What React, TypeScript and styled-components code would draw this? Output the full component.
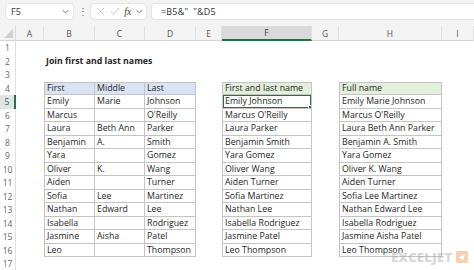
import { createGlobalStyle, styled } from 'styled-components'

const GlobalStyle = createGlobalStyle`
  html, body { margin: 0; padding: 0; background: #ffffff; }
  body { font-family: "Open Sans", "Noto Sans", sans-serif; width: 474px; height: 270px; overflow: hidden; }
`

const COLS = ['A', 'B', 'C', 'D', 'E', 'F', 'G', 'H', 'I']
const COL_WIDTHS = '16px 28px 51px 50px 51px 26px 90px 27px 103px 1fr'

const people = [
  ['Emily', 'Marie', 'Johnson'],
  ['Marcus', '', "O'Reilly"],
  ['Laura', 'Beth Ann', 'Parker'],
  ['Benjamin', 'A.', 'Smith'],
  ['Yara', '', 'Gomez'],
  ['Oliver', 'K.', 'Wang'],
  ['Aiden', '', 'Turner'],
  ['Sofia', 'Lee', 'Martinez'],
  ['Nathan', 'Edward', 'Lee'],
  ['Isabella', '', 'Rodriguez'],
  ['Jasmine', 'Aisha', 'Patel'],
  ['Leo', '', 'Thompson'],
]

function App() {
  const rows = []
  for (let r = 1; r <= 17; r++) {
    const cells: { text: string; kind: 'none' | 'head' | 'body'; fill?: string; first?: boolean; bold?: boolean; selected?: boolean }[] =
      COLS.map(() => ({ text: '', kind: 'none' }))
    if (r === 2) cells[1] = { text: 'Join first and last names', kind: 'none', bold: true }
    if (r === 4) {
      cells[1] = { text: 'First', kind: 'head', fill: '#dae3f3', first: true }
      cells[2] = { text: 'Middle', kind: 'head', fill: '#dae3f3' }
      cells[3] = { text: 'Last', kind: 'head', fill: '#dae3f3' }
      cells[5] = { text: 'First and last name', kind: 'head', fill: '#e2efda', first: true }
      cells[7] = { text: 'Full name', kind: 'head', fill: '#e2efda', first: true }
    }
    if (r >= 5 && r <= 16) {
      const [f, m, l] = people[r - 5]
      cells[1] = { text: f, kind: 'body', first: true }
      cells[2] = { text: m, kind: 'body' }
      cells[3] = { text: l, kind: 'body' }
      cells[5] = { text: f + ' ' + l, kind: 'body', first: true, selected: r === 5 }
      cells[7] = { text: [f, m, l].filter(Boolean).join(' '), kind: 'body', first: true }
    }
    rows.push(
      <RowHead key={'h' + r} $active={r === 5}>{r}</RowHead>,
      ...cells.map((c, i) => (
        <Cell key={r + '-' + i} $kind={c.kind} $fill={c.fill} $first={c.first} $bold={c.bold}>
          {c.text}
          {c.selected && <Selection><Handle /></Selection>}
        </Cell>
      ))
    )
  }

  return (
    <>
      <GlobalStyle />
      <Sheet>
        <FormulaBar>
          <NameBox>
            <span>F5</span>
            <Chevron viewBox="0 0 10 6"><path d="M1 1l4 4 4-4" /></Chevron>
          </NameBox>
          <Dots>⋮</Dots>
          <ToolBox>
            <svg width="9" height="9" viewBox="0 0 10 10"><path d="M1 1l8 8M9 1l-8 8" stroke="#c4c4c4" strokeWidth="1" /></svg>
            <svg width="10" height="9" viewBox="0 0 11 10"><path d="M1 5l3 3 6-7" stroke="#c4c4c4" strokeWidth="1" fill="none" /></svg>
            <Fx>fx</Fx>
            <Chevron viewBox="0 0 10 6"><path d="M1 1l4 4 4-4" /></Chevron>
          </ToolBox>
          <FormulaInput>=B5&amp;"&nbsp;&nbsp;"&amp;D5</FormulaInput>
        </FormulaBar>
        <Grid>
          <Corner><CornerTri /></Corner>
          {COLS.map((c) => (
            <ColHead key={c} $active={c === 'F'}>{c}</ColHead>
          ))}
          {rows}
        </Grid>
        <Watermark>
          <span>EXCELJET</span>
          <Logo viewBox="0 0 12 12">
            <rect x="0" y="0" width="12" height="12" rx="2" fill="#f08a3e" />
            <path d="M3 6.5L9 3 7.2 9.5z" fill="#ffffff" />
          </Logo>
        </Watermark>
      </Sheet>
    </>
  )
}

const Sheet = styled.div`
  position: relative;
  width: 474px;
  height: 270px;
  overflow: hidden;
  background: #ffffff;
`

const FormulaBar = styled.div`
  display: flex;
  align-items: center;
  height: 26px;
  padding: 0 0 0 5px;
  box-sizing: border-box;
  background: #f3f3f3;
  gap: 4px;
  font-family: "Open Sans", sans-serif;
  font-size: 9px;
  color: #333;
`

const Box = styled.div`
  display: flex;
  align-items: center;
  height: 17px;
  margin-top: -4px;
  background: #ffffff;
  border: 1px solid #e4e4e4;
  border-radius: 4px;
  box-sizing: border-box;
`

const NameBox = styled(Box)`
  width: 69px;
  padding: 0 4px 0 5px;
  justify-content: space-between;
`

const ToolBox = styled(Box)`
  width: 57px;
  padding: 0 3px 0 5px;
  justify-content: space-between;
`

const FormulaInput = styled(Box)`
  flex: 1;
  padding-left: 9px;
  border-right: none;
  border-radius: 4px 0 0 4px;
  letter-spacing: 0.2px;
`

const Chevron = styled.svg`
  width: 7px;
  height: 5px;
  fill: none;
  stroke: #666;
  stroke-width: 1.3;
`

const Dots = styled.div`
  width: 8px;
  text-align: center;
  margin-top: -4px;
  color: #666;
  font-size: 10px;
`

const Fx = styled.span`
  font-family: "Liberation Serif", serif;
  font-style: italic;
  font-size: 10px;
  color: #444;
`

const Grid = styled.div`
  display: grid;
  grid-template-columns: ${COL_WIDTHS};
  grid-template-rows: 15px repeat(17, 13.5px);
  font-family: "Open Sans", "Noto Sans", sans-serif;
  font-size: 8.8px;
  color: #262626;
`

const Corner = styled.div`
  background: #f3f3f3;
  border-bottom: 1px solid #d4d4d4;
  border-right: 1px solid #d9d9d9;
  position: relative;
  box-sizing: border-box;
`

const CornerTri = styled.div`
  position: absolute;
  right: 2px;
  bottom: 2px;
  width: 0;
  height: 0;
  border-left: 9px solid transparent;
  border-bottom: 9px solid #d0d0d0;
`

const ColHead = styled.div<{ $active?: boolean }>`
  display: flex;
  align-items: center;
  justify-content: center;
  box-sizing: border-box;
  background: ${(p) => (p.$active ? '#d9d9d9' : '#f3f3f3')};
  border-right: 1px solid #e0e0e0;
  border-bottom: ${(p) => (p.$active ? '2px solid #217346' : '1px solid #d4d4d4')};
  color: ${(p) => (p.$active ? '#3b3b3b' : '#555')};
  font-size: 8.5px;
`

const RowHead = styled.div<{ $active?: boolean }>`
  display: flex;
  align-items: center;
  justify-content: center;
  box-sizing: border-box;
  background: ${(p) => (p.$active ? '#e3e3e3' : '#ffffff')};
  border-right: ${(p) => (p.$active ? '2px solid #217346' : '1px solid #e0e0e0')};
  color: ${(p) => (p.$active ? '#217346' : '#666')};
  font-size: 8.5px;
`

const Cell = styled.div<{ $kind: 'none' | 'head' | 'body'; $fill?: string; $first?: boolean; $bold?: boolean }>`
  position: relative;
  display: flex;
  align-items: center;
  box-sizing: border-box;
  padding-left: 2px;
  white-space: nowrap;
  overflow: ${(p) => (p.$bold ? 'visible' : 'hidden')};
  font-weight: ${(p) => (p.$bold ? 700 : 400)};
  background: ${(p) => p.$fill || 'transparent'};
  border-right: ${(p) => (p.$kind === 'none' ? 'none' : '1px solid #c4c4c4')};
  border-bottom: ${(p) => (p.$kind === 'none' ? 'none' : '1px solid #c4c4c4')};
  border-top: ${(p) => (p.$kind === 'head' ? '1px solid #c4c4c4' : 'none')};
  border-left: ${(p) => (p.$first ? '1px solid #c4c4c4' : 'none')};
`

const Selection = styled.div`
  position: absolute;
  left: -1px;
  top: -1px;
  right: -1px;
  bottom: -1px;
  border: 2px solid #217346;
`

const Handle = styled.div`
  position: absolute;
  right: -4px;
  bottom: -4px;
  width: 4px;
  height: 4px;
  background: #217346;
  border: 1px solid #ffffff;
`

const Watermark = styled.div`
  position: absolute;
  left: 391px;
  top: 248px;
  display: flex;
  align-items: center;
  gap: 4px;
  opacity: 0.4;
  font-family: "Open Sans", sans-serif;
  font-weight: 800;
  font-size: 13px;
  letter-spacing: 0.3px;
  color: #a0a0a0;
`

const Logo = styled.svg`
  width: 12px;
  height: 12px;
`

export default App
